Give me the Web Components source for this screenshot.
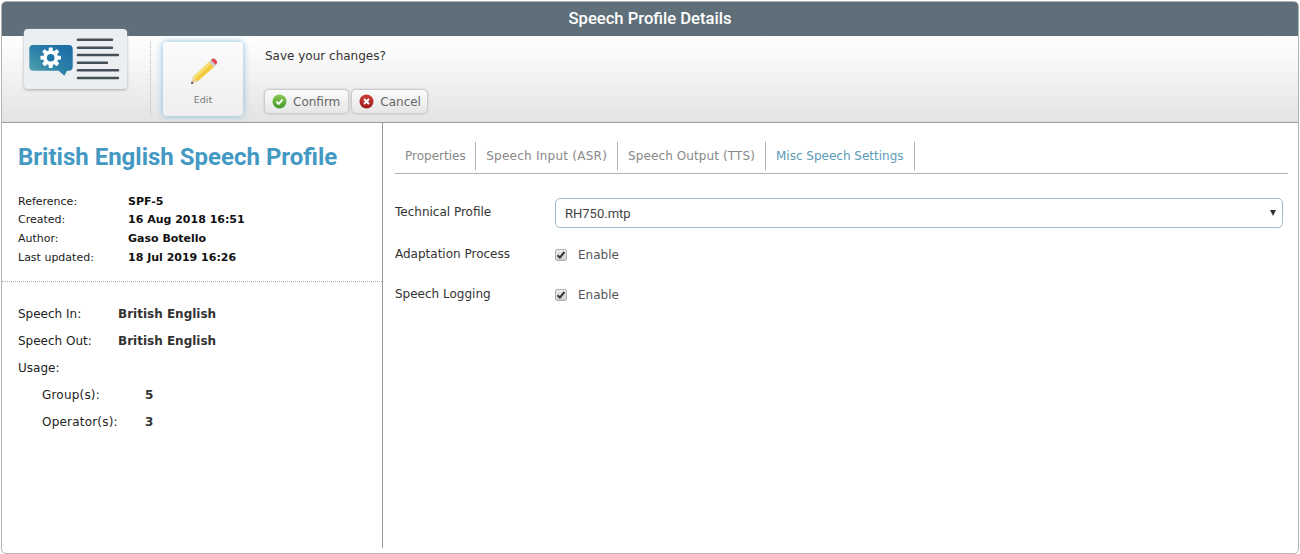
<!DOCTYPE html>
<html>
<head>
<meta charset="utf-8">
<title>Speech Profile Details</title>
<style>
html, body { height: 100%; }
body { margin: 0; background: #fff; font: 12px "DejaVu Sans", sans-serif; color: #333; }
</style>
</head>
<body>
<profile-window></profile-window>

<template id="toolbar-button-tpl">
<style>
:host { display: inline-flex; align-items: center; height: 25px; box-sizing: border-box; padding: 0 8px 0 7px; gap: 6px;
  border: 1px solid #ccc; border-radius: 5px; background: linear-gradient(#fbfbfb, #e6e6e6); box-shadow: 0 0 2px #bbb;
  font-size: 12px; color: #666; }
</style>
<slot name="icon"></slot><slot></slot>
</template>

<template id="meta-row-tpl">
<style>
:host { display: flex; height: 18.6px; align-items: center; font-size: 11px; color: #222; }
.k { width: var(--key-width, 110px); flex: none; letter-spacing: var(--key-spacing, 0); }
.v { font-weight: bold; color: var(--value-color, #111); }
</style>
<span class="k"><slot name="key"></slot></span><span class="v"><slot></slot></span>
</template>

<template id="tab-item-tpl">
<style>
:host { display: flex; align-items: center; height: 28px; padding: 0 10px; border-right: 1px solid #a9b4ba; font-size: 12px; color: #888; }
:host([active]) { color: #5a9bb8; }
</style>
<slot></slot>
</template>

<template id="form-row-tpl">
<style>
:host { display: flex; align-items: center; font-size: 12px; color: #333; }
.l { width: 160px; flex: none; margin-top: -2px; }
:host(.chk) .l { margin-top: 0; }
.c { flex: 1; display: flex; align-items: center; }
</style>
<span class="l"><slot name="label"></slot></span><div class="c"><slot></slot></div>
</template>

<template id="check-box-tpl">
<style>
:host { display: flex; align-items: center; font-size: 12px; color: #555; margin-top: 2px; }
.b { width: 12px; height: 12px; box-sizing: border-box; border: 1px solid #b0b0b0; border-radius: 2px; background: linear-gradient(#ececec, #cfcfcf); margin-right: 11px; display: flex; }
svg { display: block; }
</style>
<span class="b"><svg width="10" height="10" viewBox="0 0 10 10"><path d="M1.6 5.2 L3.9 7.6 L8.4 2" fill="none" stroke="#333" stroke-width="2"/></svg></span><slot></slot>
</template>

<template id="select-box-tpl">
<style>
:host { flex: 1; display: flex; align-items: center; justify-content: space-between; height: 30px; box-sizing: border-box;
  border: 1px solid #9dbcc8; border-radius: 5px; padding: 0 6px 0 9px; font: 13px Roboto, sans-serif; color: #444; }
i { width: 0; height: 0; border: 3.5px solid transparent; border-top: 6px solid #333; border-bottom: 0; }
</style>
<slot></slot><i></i>
</template>

<template id="window-tpl">
<style>
:host { display: flex; flex-direction: column; box-sizing: border-box; height: 553px; margin: 1px; border: 1px solid #b4b4b4; border-radius: 5px; overflow: hidden; position: relative; width: 1298px; }
.title { height: 34px; box-sizing: border-box; padding-bottom: 2px; flex: none; background: #5f6f7a; color: #fff; font: 500 16.6px Roboto, sans-serif; display: flex; align-items: center; justify-content: center; }
.toolbar { height: 87px; flex: none; box-sizing: border-box; border-bottom: 1px solid #999; background: linear-gradient(#fff, #fafafa 20%, #e3e3e3);
  display: flex; padding-left: 148px; padding-top: 5px; }
.sep { width: 0; height: 75px; border-left: 1px dotted #bbb; }
.edit { width: 80px; height: 74px; margin: 1px 0 0 12px; box-sizing: border-box; border-radius: 4px; background: linear-gradient(#fcfcfc, #eeeeee);
  box-shadow: 0 0 7px #7fbcdc; display: flex; flex-direction: column; align-items: center; font-size: 9.5px; color: #777; }
.edit svg { margin-top: 16px; }
.edit span { margin-top: 8px; }
.confirm { margin-left: 21px; padding-top: 8px; }
.confirm p { margin: 0 0 25px 1px; font-size: 12px; line-height: 15px; color: #333; }
.btns { display: flex; gap: 2px; }
.logo { position: absolute; left: 22px; top: 27px; width: 103px; height: 60px; box-sizing: border-box; border-radius: 4px; background: #eceff1; box-shadow: 0 1px 3px #aaa; }
.body { flex: 1; display: flex; min-height: 0; }
.left { width: 381px; flex: none; box-sizing: border-box; border-right: 1px solid #999; margin-bottom: 5px; }
h1 { margin: 0; padding: 17px 0 0 16px; font: bold 24px/34px Roboto, sans-serif; color: #4499c3; height: 51px; }
.meta { padding: 1px 0 14px 16px; border-bottom: 1px dotted #aaa; height: 75px; }
.usage { padding: 18px 0 0 16px; --value-color: #333; }
.usage meta-row { height: 27px; font-size: 12px; --key-width: 100px; }
.usage meta-row.sub { padding-left: 24px; --key-width: 103px; --key-spacing: .2px; }
.right { flex: 1; padding: 19px 10px 0 12px; min-width: 0; }
.tabs { display: flex; border-bottom: 1px solid #a9b4ba; height: 31px; margin-bottom: 24px; }
.rows form-row.first { height: 30px; margin-bottom: 17px; padding-right: 5px; }
.rows form-row.chk { height: 18px; margin-bottom: 22px; }
</style>
<div class="title">Speech Profile Details</div>
<div class="toolbar">
  <div class="sep"></div>
  <div class="edit">
    <svg width="30" height="28" viewBox="0 0 30 28">
      <path d="M3 26 L5 19 L9.5 23.5 Z" fill="#e9cf9e"/>
      <path d="M3 26 L3.8 23.3 L5.7 25.2 Z" fill="#444"/>
      <path d="M5 19 L21 4 L26 9 L9.5 23.5 Z" fill="#f2c83c"/>
      <path d="M5 19 L21 4 L23 6 L7 21 Z" fill="#f8df72"/>
      <path d="M21 4 L23 2 L28 7 L26 9 Z" fill="#c9c9c9"/>
      <path d="M23 2 L24.5 0.8 Q26 0 27.5 1.5 L28.8 3 Q29.6 4.5 28.6 5.8 L28 7 Z" fill="#e0485a"/>
    </svg>
    <span>Edit</span>
  </div>
  <div class="confirm">
    <p>Save your changes?</p>
    <div class="btns">
      <tool-button>
        <svg slot="icon" width="15" height="15" viewBox="0 0 15 15"><defs><linearGradient id="g" x1="0" y1="0" x2="0" y2="1"><stop offset="0" stop-color="#8cc950"/><stop offset="1" stop-color="#3f9a2e"/></linearGradient></defs><circle cx="7.5" cy="7.5" r="7" fill="url(#g)"/><path d="M4.5 7.7 L6.7 9.8 L10.6 5.6" fill="none" stroke="#fff" stroke-width="1.9"/></svg>
        Confirm
      </tool-button>
      <tool-button style="padding-right:6px">
        <svg slot="icon" width="15" height="15" viewBox="0 0 15 15"><defs><linearGradient id="r" x1="0" y1="0" x2="0" y2="1"><stop offset="0" stop-color="#d0403a"/><stop offset="1" stop-color="#9c1a18"/></linearGradient></defs><circle cx="7.5" cy="7.5" r="7" fill="url(#r)"/><path d="M5 5 L10 10 M10 5 L5 10" stroke="#fff" stroke-width="2"/></svg>
        Cancel
      </tool-button>
    </div>
  </div>
</div>
<div class="logo">
  <svg width="103" height="60" viewBox="0 0 103 60">
    <defs><linearGradient id="b" x1="0" y1="1" x2="1" y2="0"><stop offset="0" stop-color="#5aa9ae"/><stop offset="0.5" stop-color="#2a7fa8"/><stop offset="1" stop-color="#1a6aa6"/></linearGradient></defs>
    <path d="M9.300 16 H44.700 Q48.700 16 48.700 20 V37.700 Q48.700 41.700 44.700 41.700 H43 L40.500 46.700 L34.500 41.700 H9.300 Q5.300 41.700 5.300 37.700 V20 Q5.300 16 9.300 16 Z" fill="url(#b)"/>
    <g transform="translate(26.700 28.700)" fill="#fff">
      <circle r="7.400"/>
      <rect x="-2" y="-10.300" width="4" height="20.600" rx="1"/><rect x="-2" y="-10.300" width="4" height="20.600" rx="1" transform="rotate(45)"/><rect x="-2" y="-10.300" width="4" height="20.600" rx="1" transform="rotate(90)"/><rect x="-2" y="-10.300" width="4" height="20.600" rx="1" transform="rotate(135)"/>
      <circle r="3.800" fill="#1f74a8"/>
    </g>
    <g fill="#454f57">
      <rect x="52.700" y="9.500" width="36.500" height="2.400" rx="1.200"/>
      <rect x="52.700" y="17.500" width="36.500" height="2.400" rx="1.200"/>
      <rect x="52.700" y="24.800" width="42.500" height="2.400" rx="1.200"/>
      <rect x="52.700" y="32.500" width="31.500" height="2.400" rx="1.200"/>
      <rect x="52.700" y="40.100" width="42.500" height="2.400" rx="1.200"/>
      <rect x="52.700" y="47.800" width="42.500" height="2.400" rx="1.200"/>
    </g>
  </svg>
</div>
<div class="body">
  <div class="left">
    <h1>British English Speech Profile</h1>
    <div class="meta">
      <meta-row><span slot="key">Reference:</span>SPF-5</meta-row>
      <meta-row><span slot="key">Created:</span>16 Aug 2018 16:51</meta-row>
      <meta-row><span slot="key">Author:</span>Gaso Botello</meta-row>
      <meta-row><span slot="key">Last updated:</span>18 Jul 2019 16:26</meta-row>
    </div>
    <div class="usage">
      <meta-row><span slot="key">Speech In:</span>British English</meta-row>
      <meta-row><span slot="key">Speech Out:</span>British English</meta-row>
      <meta-row><span slot="key">Usage:</span></meta-row>
      <meta-row class="sub"><span slot="key">Group(s):</span>5</meta-row>
      <meta-row class="sub"><span slot="key">Operator(s):</span>3</meta-row>
    </div>
  </div>
  <div class="right">
    <div class="tabs">
      <tab-item style="padding-right:9.5px">Properties</tab-item>
      <tab-item style="letter-spacing:.25px">Speech Input (ASR)</tab-item>
      <tab-item style="letter-spacing:.1px">Speech Output (TTS)</tab-item>
      <tab-item active>Misc Speech Settings</tab-item>
    </div>
    <div class="rows">
      <form-row class="first"><span slot="label">Technical Profile</span><select-box>RH750.mtp</select-box></form-row>
      <form-row class="chk"><span slot="label">Adaptation Process</span><check-box>Enable</check-box></form-row>
      <form-row class="chk"><span slot="label">Speech Logging</span><check-box>Enable</check-box></form-row>
    </div>
  </div>
</div>
</template>

<script>
function fromTemplate(id) {
  return class extends HTMLElement {
    constructor() {
      super();
      this.attachShadow({ mode: 'open' });
      this.shadowRoot.appendChild(document.getElementById(id).content.cloneNode(true));
    }
  };
}
customElements.define('tool-button', fromTemplate('toolbar-button-tpl'));
customElements.define('meta-row', fromTemplate('meta-row-tpl'));
customElements.define('tab-item', fromTemplate('tab-item-tpl'));
customElements.define('form-row', fromTemplate('form-row-tpl'));
customElements.define('check-box', fromTemplate('check-box-tpl'));
customElements.define('select-box', fromTemplate('select-box-tpl'));
customElements.define('profile-window', fromTemplate('window-tpl'));
</script>
</body>
</html>
